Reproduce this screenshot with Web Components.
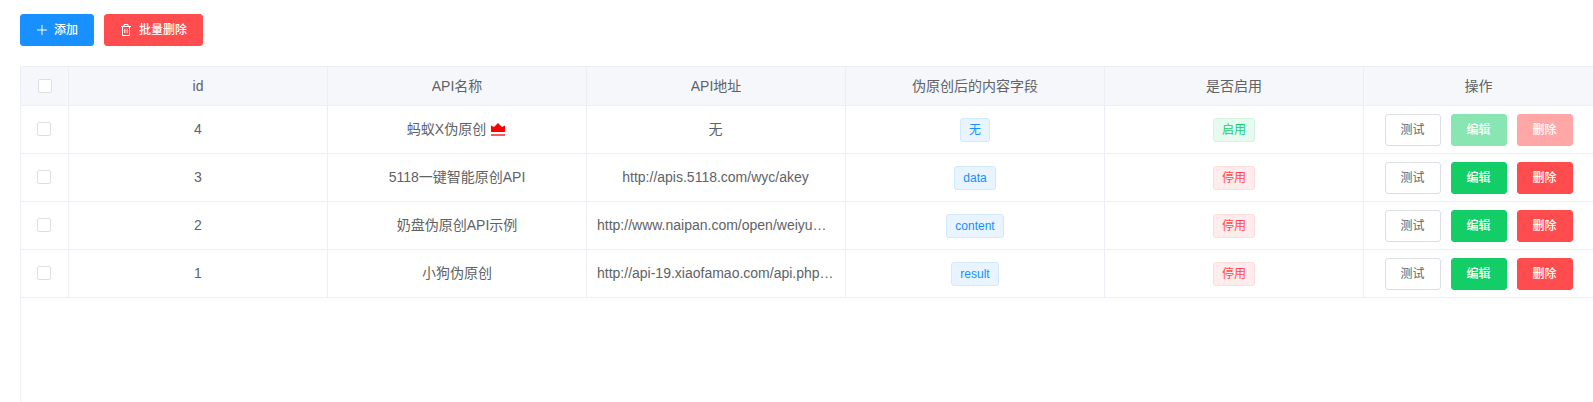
<!DOCTYPE html>
<html>
<head>
<meta charset="utf-8">
<title>API</title>
<style>
  html, body { margin: 0; height: 100%; overflow: hidden; background: #fff; }
  body {
    font-family: "Liberation Sans", "Noto Sans CJK SC", sans-serif;
    color: #606266;
  }
</style>
</head>
<body>
<api-page></api-page>

<script>
//plain button, variant comes from an attribute
class UiButton extends HTMLElement {
  constructor() {
    super();
    this.attachShadow({ mode: 'open' });
    this.shadowRoot.innerHTML = `
      <style>
        :host {
          display: inline-flex;
          align-items: center;
          justify-content: center;
          box-sizing: border-box;
          height: 32px;
          border: 1px solid #dcdfe6;
          border-radius: 3px;
          background: #fff;
          color: #606266;
          font-size: 12px;
          line-height: 12px;
        }
        :host([kind="primary"]) { background: #1890ff; border-color: #1890ff; color: #fff; font-weight: 500; }
        :host([kind="danger"]) { background: #ff4d4f; border-color: #ff4d4f; color: #fff; font-weight: 500; }
        :host([kind="success"]) { background: #13ce66; border-color: #13ce66; color: #fff; font-weight: 500; }
        :host([kind="success"][disabled]) { background: #89e6b2; border-color: #89e6b2; }
        :host([kind="danger"][disabled]) { background: #ffa6a7; border-color: #ffa6a7; }
        ::slotted(svg) { display: block; flex: none; }
      </style>
      <slot></slot>`;
  }
}

//small coloured label
class UiTag extends HTMLElement {
  constructor() {
    super();
    this.attachShadow({ mode: 'open' });
    this.shadowRoot.innerHTML = `
      <style>
        :host {
          display: inline-block;
          box-sizing: border-box;
          height: 24px;
          padding: 0 8px;
          line-height: 22px;
          font-size: 12px;
          border: 1px solid #d1e9ff;
          border-radius: 3px;
          background: #e8f4ff;
          color: #1890ff;
          white-space: nowrap;
        }
        :host([kind="success"]) { background: #e7faf0; border-color: #d0f5e0; color: #13ce66; }
        :host([kind="danger"]) { background: #ffeded; border-color: #ffdbdb; color: #ff4949; }
      </style>
      <slot></slot>`;
  }
}

class UiCheckbox extends HTMLElement {
  constructor() {
    super();
    this.attachShadow({ mode: 'open' });
    this.shadowRoot.innerHTML = `
      <style>
        :host {
          display: block;
          box-sizing: border-box;
          width: 14px;
          height: 14px;
          border: 1px solid #dcdfe6;
          border-radius: 2px;
          background: #fff;
        }
      </style>`;
  }
}

//one row of the table, cells are passed through the slot
class TableRow extends HTMLElement {
  constructor() {
    super();
    this.attachShadow({ mode: 'open' });
    this.shadowRoot.innerHTML = `
      <style>
        :host {
          display: grid;
          grid-template-columns: 48px repeat(5, 259px) 1fr;
          height: 48px;
          box-sizing: border-box;
          border-bottom: 1px solid #ebeef5;
          background: #fff;
          font-size: 14px;
        }
        :host([head]) {
          height: 39px;
          background: #f5f7fa;
        }
      </style>
      <slot></slot>`;
  }
}

class TableCell extends HTMLElement {
  constructor() {
    super();
    this.attachShadow({ mode: 'open' });
    this.shadowRoot.innerHTML = `
      <style>
        :host {
          display: flex;
          align-items: center;
          justify-content: center;
          box-sizing: border-box;
          min-width: 0;
          padding: 0 10px;
          border-right: 1px solid #ebeef5;
        }
        :host(:last-child) { border-right: 0; }
        :host([check]) { padding: 0; }
        :host([check][lift]) { padding: 0 0 1px; }
        :host([cjk]) { padding-bottom: 2px; }
        :host([lift]) { padding-bottom: 2px; }
        :host([lift][cjk]) { padding-bottom: 4px; }
        :host([url]) { padding-right: 11px; }
        .text {
          display: block;
          min-width: 0;
          overflow: hidden;
          white-space: nowrap;
          text-overflow: ellipsis;
        }
        :host([actions]) .text { display: flex; gap: 10px; overflow: visible; }
        :host([actions]) ::slotted(ui-button) { width: 56px; }
      </style>
      <span class="text"><slot></slot></span>`;
  }
}

class CrownIcon extends HTMLElement {
  constructor() {
    super();
    this.attachShadow({ mode: 'open' });
    this.shadowRoot.innerHTML = `
      <style>
        :host { display: inline-block; width: 14px; height: 13px; margin: 0 2px 0 5px; vertical-align: -2px; }
        svg { display: block; }
      </style>
      <svg width="14" height="13" viewBox="0 0 14 13">
        <path fill="#f00" d="M0 2.500L3 4l2-2 2-2 2 2 2 2 3-1.500V9H0z"/>
        <rect y="11" width="14" height="2" fill="#ff5a5a"/>
      </svg>`;
  }
}

class ApiTable extends HTMLElement {
  constructor() {
    super();
    this.attachShadow({ mode: 'open' });
    this.shadowRoot.innerHTML = `
      <style>
        :host {
          display: block;
          box-sizing: border-box;
          height: 336px;
          border-left: 1px solid #ebeef5;
          border-top: 1px solid #ebeef5;
        }
      </style>
      <div id="rows"></div>`;
  }

  connectedCallback() {
    const rows = [
      { id: 4, name: '蚂蚁X伪原创', crown: true, url: '无', field: '无', on: true, locked: true },
      { id: 3, name: '5118一键智能原创API', url: 'http://apis.5118.com/wyc/akey', field: 'data' },
      { id: 2, name: '奶盘伪原创API示例', url: 'http://www.naipan.com/open/weiyuanchuang/wyc.php', field: 'content' },
      { id: 1, name: '小狗伪原创', url: 'http://api-19.xiaofamao.com/api.php?json=0', field: 'result' }
    ];

    let html = `
      <table-row head>
        <table-cell check><ui-checkbox></ui-checkbox></table-cell>
        <table-cell>id</table-cell>
        <table-cell cjk>API名称</table-cell>
        <table-cell cjk>API地址</table-cell>
        <table-cell cjk>伪原创后的内容字段</table-cell>
        <table-cell cjk>是否启用</table-cell>
        <table-cell cjk>操作</table-cell>
      </table-row>`;

    rows.forEach(row => {
      const disabled = row.locked ? 'disabled' : '';
      html += `
      <table-row>
        <table-cell check lift><ui-checkbox style="margin-right:2px"></ui-checkbox></table-cell>
        <table-cell lift>${row.id}</table-cell>
        <table-cell lift cjk>${row.name}${row.crown ? '<crown-icon></crown-icon>' : ''}</table-cell>
        <table-cell lift url ${row.url === '无' ? 'cjk' : ''}>${row.url}</table-cell>
        <table-cell><ui-tag>${row.field}</ui-tag></table-cell>
        <table-cell><ui-tag kind="${row.on ? 'success' : 'danger'}">${row.on ? '启用' : '停用'}</ui-tag></table-cell>
        <table-cell actions>
          <ui-button>测试</ui-button>
          <ui-button kind="success" ${disabled}>编辑</ui-button>
          <ui-button kind="danger" ${disabled}>删除</ui-button>
        </table-cell>
      </table-row>`;
    });

    this.shadowRoot.querySelector('#rows').innerHTML = html;
  }
}

class ApiPage extends HTMLElement {
  constructor() {
    super();
    this.attachShadow({ mode: 'open' });
    this.shadowRoot.innerHTML = `
      <style>
        :host {
          display: block;
          padding: 14px 0 0 20px;
        }
        .toolbar {
          display: flex;
          gap: 10px;
          margin-bottom: 20px;
        }
        .add { width: 74px; gap: 6px; justify-content: flex-start; padding-left: 15px; }
        .remove { width: 99px; gap: 7px; justify-content: flex-start; padding-left: 15px; }
      </style>
      <div class="toolbar">
        <ui-button class="add" kind="primary">
          <svg width="12" height="12" viewBox="0 0 12 12" fill="none" stroke="#fff" stroke-width="1">
            <path d="M6 1v10M1 6h10"/>
          </svg>
          <span>添加</span>
        </ui-button>
        <ui-button class="remove" kind="danger">
          <svg width="12" height="12" viewBox="0 0 12 12" fill="none" stroke="#fff" stroke-width="1">
            <path d="M1 2.500h10M4 2.500V.5h4v2M2.500 2.500v9h7v-9M4.800 5v4M7.200 5v4"/>
          </svg>
          <span>批量删除</span>
        </ui-button>
      </div>
      <api-table></api-table>`;
  }
}

window.customElements.define('ui-button', UiButton);
window.customElements.define('ui-tag', UiTag);
window.customElements.define('ui-checkbox', UiCheckbox);
window.customElements.define('table-row', TableRow);
window.customElements.define('table-cell', TableCell);
window.customElements.define('crown-icon', CrownIcon);
window.customElements.define('api-table', ApiTable);
window.customElements.define('api-page', ApiPage);
</script>
</body>
</html>
